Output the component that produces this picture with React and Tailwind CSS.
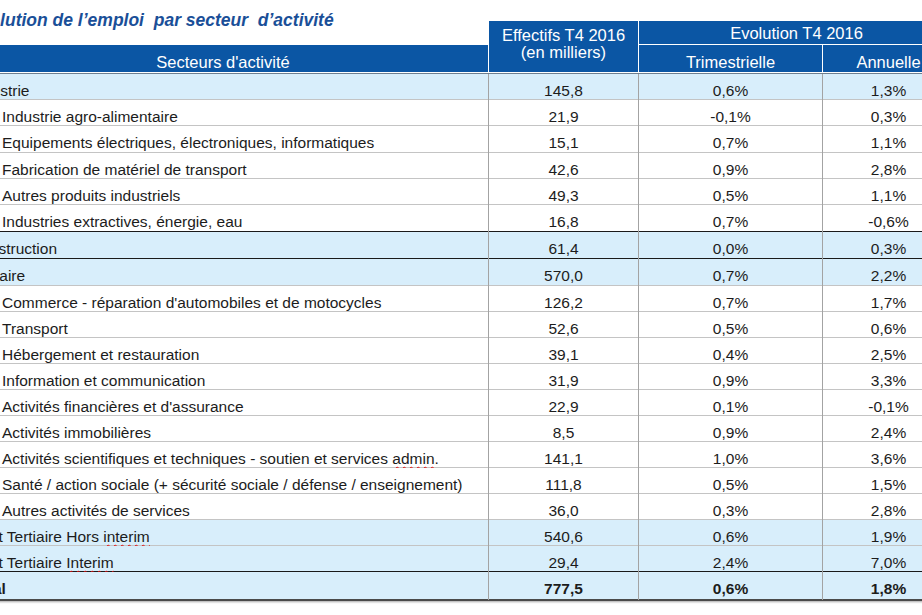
import React from "react";

const rows = [
  { l: "Industrie", e: "145,8", t: "0,6%", a: "1,3%", cat: true, h: "h-[26px]" },
  { l: "Industrie agro-alimentaire", e: "21,9", t: "-0,1%", a: "0,3%", h: "h-[26px]" },
  { l: "Equipements électriques, électroniques, informatiques", e: "15,1", t: "0,7%", a: "1,1%", h: "h-[27px]" },
  { l: "Fabrication de matériel de transport", e: "42,6", t: "0,9%", a: "2,8%", h: "h-[26px]" },
  { l: "Autres produits industriels", e: "49,3", t: "0,5%", a: "1,1%", h: "h-[26px]" },
  { l: "Industries extractives, énergie, eau", e: "16,8", t: "0,7%", a: "-0,6%", h: "h-[27px]", black: true },
  { l: "Construction", e: "61,4", t: "0,0%", a: "0,3%", cat: true, h: "h-[27px]", black: true },
  { l: "Tertiaire", e: "570,0", t: "0,7%", a: "2,2%", cat: true, h: "h-[27px]" },
  { l: "Commerce - réparation d'automobiles et de motocycles", e: "126,2", t: "0,7%", a: "1,7%", h: "h-[26px]" },
  { l: "Transport", e: "52,6", t: "0,5%", a: "0,6%", h: "h-[26px]" },
  { l: "Hébergement et restauration", e: "39,1", t: "0,4%", a: "2,5%", h: "h-[26px]" },
  { l: "Information et communication", e: "31,9", t: "0,9%", a: "3,3%", h: "h-[26px]" },
  { l: "Activités financières et d'assurance", e: "22,9", t: "0,1%", a: "-0,1%", h: "h-[26px]" },
  { l: "Activités immobilières", e: "8,5", t: "0,9%", a: "2,4%", h: "h-[26px]" },
  { l: "SCI", e: "141,1", t: "1,0%", a: "3,6%", h: "h-[26px]" },
  { l: "Santé / action sociale (+ sécurité sociale / défense / enseignement)", e: "111,8", t: "0,5%", a: "1,5%", h: "h-[26px]" },
  { l: "Autres activités de services", e: "36,0", t: "0,3%", a: "2,8%", h: "h-[26px]" },
  { l: "HORS", e: "540,6", t: "0,6%", a: "1,9%", cat: true, h: "h-[26px]" },
  { l: "INT", e: "29,4", t: "2,4%", a: "7,0%", cat: true, h: "h-[26px]", black: true },
  { l: "Total", e: "777,5", t: "0,6%", a: "1,8%", cat: true, bold: true, h: "h-[29px]", last: true },
];

const wavy =
  "underline [text-decoration-line:underline] decoration-wavy [text-decoration-style:wavy] decoration-[#e01010] [text-decoration-color:#e01010] decoration-[1px] underline-offset-[2px]";

function Label({ l }) {
  if (l === "SCI")
    return (
      <span>
        Activités scientifiques et techniques - soutien et services <span className={wavy}>admin</span>.
      </span>
    );
  if (l === "HORS")
    return (
      <span>
        Dont Tertiaire Hors <span className={wavy}>interim</span>
      </span>
    );
  if (l === "INT")
    return (
      <span>
        Dont Tertiaire <span className={wavy}>Interim</span>
      </span>
    );
  return <span>{l}</span>;
}

export default function App() {
  return (
    <div className="w-[922px] h-[615px] overflow-hidden bg-white" style={{ fontFamily: '"Liberation Sans", Arial, sans-serif' }}>
      <div className="-ml-[42px] w-[996px]">
        {/* Header */}
        <div className="grid grid-cols-[530px_150px_184px_132px] grid-rows-[21px_24px_28px]">
          <div className="col-start-1 row-start-1 row-span-2 pl-[10px] pt-[9px]">
            <div className="text-[17.5px] font-bold italic text-[#1a4f98] whitespace-pre leading-[22px]">
              {"Evolution de l’emploi  par secteur  d’activité"}
            </div>
          </div>
          <div className="col-start-2 row-start-2 row-span-2 bg-[#0b56a4] border-l border-white border-b text-white text-[16.5px] leading-[17px] text-center pt-[6px]">
            <div>Effectifs T4 2016</div>
            <div>(en milliers)</div>
          </div>
          <div className="col-start-3 col-span-2 row-start-2 bg-[#0b56a4] border-l border-b border-white text-white text-[16.5px] flex items-center justify-center pt-[2px]">
            Evolution T4 2016
          </div>
          <div className="col-start-1 row-start-3 bg-[#0b56a4] border-b border-white text-white text-[16.5px] flex items-center justify-center pt-[8px]">
            Secteurs d'activité
          </div>
          <div className="col-start-3 row-start-3 bg-[#0b56a4] border-l border-b border-white text-white text-[16.5px] flex items-center justify-center pt-[8px]">
            Trimestrielle
          </div>
          <div className="col-start-4 row-start-3 bg-[#0b56a4] border-l border-b border-white text-white text-[16.5px] flex items-center justify-center pt-[8px]">
            Annuelle
          </div>
        </div>
        {/* header bottom dark line */}
        <div className="h-px bg-[#6f7f8f]" />
        {/* Body */}
        <div className="flex flex-col text-[15.5px] text-[#1c1c1c]">
          {rows.map((r, i) => (
            <div
              key={i}
              className={`grid grid-cols-[530px_150px_184px_132px] ${r.h} ${r.cat ? "bg-[#d8eefb]" : "bg-white"} ${
                r.last
                  ? "border-b-2 border-[#4a4a4a] shadow-[0_1px_2px_rgba(0,0,0,0.35)]"
                  : r.black
                  ? "border-b border-[#1a1a1a]"
                  : "border-b border-[#c4c4c4]"
              } ${r.bold ? "font-bold" : ""}`}
            >
              <div className={`flex items-center pt-[5px] whitespace-nowrap ${r.cat ? "pl-[12px]" : "pl-[44px]"}`}>
                <Label l={r.l} />
              </div>
              <div className="flex items-center justify-center pt-[5px] border-l border-[#a3a3a3]">{r.e}</div>
              <div className="flex items-center justify-center pt-[5px] border-l border-[#a3a3a3]">{r.t}</div>
              <div className="flex items-center justify-center pt-[5px] border-l border-[#a3a3a3]">{r.a}</div>
            </div>
          ))}
        </div>
      </div>
    </div>
  );
}
